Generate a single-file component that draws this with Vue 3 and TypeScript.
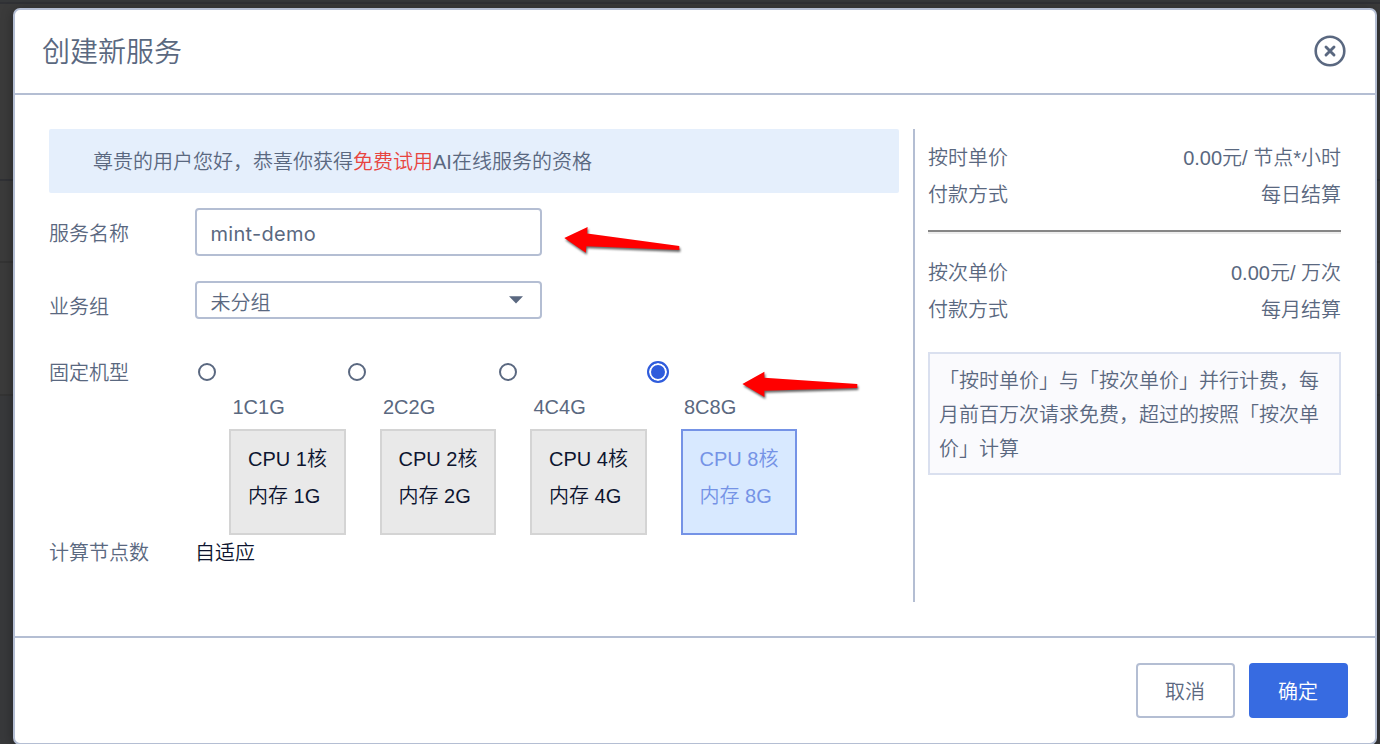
<script setup lang="ts">
import { ref } from 'vue'

interface Machine {
  id: string
  cpu: number
  memory: number
}

interface Price {
  label: string
  price: string
  cycle: string
}

const machines: Machine[] = [
  { id: '1C1G', cpu: 1, memory: 1 },
  { id: '2C2G', cpu: 2, memory: 2 },
  { id: '4C4G', cpu: 4, memory: 4 },
  { id: '8C8G', cpu: 8, memory: 8 },
]

const prices: Price[] = [
  { label: '按时单价', price: '0.00元/ 节点*小时', cycle: '每日结算' },
  { label: '按次单价', price: '0.00元/ 万次', cycle: '每月结算' },
]

const serviceName = ref('mint-demo')
const selected = ref('8C8G')
</script>

<template>
  <div class="screen">
    <div class="backdrop">
      <div class="strip top"></div>
      <div class="strip a"></div>
      <div class="strip b"></div>
      <div class="strip c"></div>
      <div class="strip d"></div>
    </div>

    <section class="modal">
      <header class="head">
        <h1>创建新服务</h1>
        <svg class="close" viewBox="0 0 32 32" width="32" height="32">
          <circle cx="16" cy="16" r="14.3" />
          <path d="M12 12 L20 20 M20 12 L12 20" />
        </svg>
      </header>

      <div class="body">
        <div class="form">
          <p class="banner">尊贵的用户您好，恭喜你获得<em>免费试用</em>AI在线服务的资格</p>

          <div class="row name-row">
            <label>服务名称</label>
            <input v-model="serviceName" type="text" />
          </div>

          <div class="row group-row">
            <label>业务组</label>
            <div class="select">
              <span>未分组</span>
              <svg viewBox="0 0 14 8" width="14" height="8"><path d="M0 0.3H14L7 7.5Z" /></svg>
            </div>
          </div>

          <div class="row machine-row">
            <label>固定机型</label>
            <div class="machines">
              <div
                v-for="m in machines"
                :key="m.id"
                class="machine"
                :class="{ active: m.id === selected }"
                @click="selected = m.id"
              >
                <div class="radio"><i></i></div>
                <div class="machine-name">{{ m.id }}</div>
                <div class="spec">
                  <div>CPU {{ m.cpu }}核</div>
                  <div>内存 {{ m.memory }}G</div>
                </div>
              </div>
            </div>
          </div>

          <div class="row node-row">
            <label>计算节点数</label>
            <span class="adaptive">自适应</span>
          </div>
        </div>

        <aside class="side">
          <template v-for="(p, i) in prices" :key="p.label">
            <hr v-if="i > 0" />
            <div class="line"><span>{{ p.label }}</span><span>{{ p.price }}</span></div>
            <div class="line"><span>付款方式</span><span>{{ p.cycle }}</span></div>
          </template>
          <p class="notice">「按时单价」与「按次单价」并行计费，每月前百万次请求免费，超过的按照「按次单价」计算</p>
        </aside>
      </div>

      <footer class="foot">
        <button class="btn">取消</button>
        <button class="btn primary">确定</button>
      </footer>
    </section>

    <svg class="arrows" viewBox="0 0 1380 744" width="1380" height="744">
      <path d="M564.3 237.9L587.6 227L587.2 233.4L679.3 246V250L586.4 246.2L585.8 252.8Z" />
      <path d="M742.4 384.1L764.4 371.7V377.8L857.3 384V388L764.4 390.8V397Z" />
    </svg>
  </div>
</template>

<style>
html,
body {
  margin: 0;
  overflow: hidden;
}
</style>

<style scoped>
* {
  box-sizing: border-box;
}
.screen {
  position: relative;
  width: 1380px;
  height: 744px;
  overflow: hidden;
  padding: 8px 3px 0 13px;
  background: #3b3b3b;
  color: #5a6880;
  font: 350 20px/37px 'Liberation Sans', 'Noto Sans CJK SC', sans-serif;
}
.backdrop {
  position: absolute;
  inset: 0;
  display: flex;
  flex-direction: column;
}
.strip {
  border-bottom: 2px solid #303135;
}
.top {
  height: 4px;
  background: #36383a;
}
.a {
  height: 177px;
}
.b {
  height: 82px;
  border-color: #343434;
}
.c {
  height: 133px;
  border-color: #343434;
}
.d {
  flex: 1;
  border: 0;
  background: #38393b;
}
.modal {
  position: relative;
  width: 1364px;
  height: 737px;
  display: flex;
  flex-direction: column;
  border: 2px solid #b4bed3;
  border-radius: 7px;
  background: #fff;
  box-shadow: 0 2px 12px rgba(0, 0, 0, 0.35);
}
.head {
  height: 85px;
  display: flex;
  justify-content: space-between;
  align-items: center;
  padding: 0 29px 0 27px;
  border-bottom: 2px solid #b4bed3;
}
h1 {
  margin: 2px 0 0;
  font-size: 28px;
  font-weight: 350;
  line-height: 40px;
}
.close {
  margin-bottom: 2px;
  fill: none;
  stroke: #5a6880;
  stroke-width: 2.6;
}
.close path {
  stroke-width: 2.9;
  stroke-linecap: round;
}
.body {
  height: 541px;
  display: flex;
  padding: 34px 34px 0;
}
.form {
  width: 850px;
}
.banner {
  height: 64px;
  margin: 0 0 15px;
  padding-left: 44px;
  border-radius: 2px;
  background: #e5effc;
  line-height: 66px;
}
.banner em {
  color: #e8443f;
  font-style: normal;
}
.row {
  display: flex;
}
.row label {
  width: 146px;
  flex: none;
}
.name-row {
  height: 73px;
}
.name-row label {
  line-height: 53px;
}
input {
  width: 347px;
  height: 48px;
  padding: 3px 14px 0 13.5px;
  border: 2px solid #b4bed3;
  border-radius: 4px;
  outline: 0;
  background: #fff;
  color: #5a6880;
  font: 400 20px 'Inter', sans-serif;
  letter-spacing: 0.3px;
}
.group-row {
  height: 73px;
}
.group-row label {
  line-height: 53px;
}
.select {
  width: 347px;
  height: 38px;
  display: flex;
  justify-content: space-between;
  padding: 0 17px 0 13.5px;
  border: 2px solid #b4bed3;
  border-radius: 4px;
  line-height: 40px;
}
.select svg {
  margin-top: 13px;
  fill: #5a6880;
}
.machine-row {
  height: 181px;
}
.machine-row label {
  line-height: 39px;
}
.machines {
  display: flex;
}
.machine {
  width: 150.5px;
}
.radio {
  width: 23.8px;
  height: 36px;
  display: flex;
  align-items: center;
  justify-content: center;
}
.radio i {
  width: 18px;
  height: 18px;
  border: 2px solid #5a6880;
  border-radius: 50%;
}
.active .radio i {
  width: 22px;
  height: 22px;
  border-color: #2f5cdc;
  background: #2f5cdc;
  box-shadow: inset 0 0 0 2px #fff;
}
.machine-name {
  height: 39px;
  padding-left: 37.5px;
  line-height: 35px;
}
.spec {
  width: 116.5px;
  height: 106px;
  margin-left: 34px;
  padding: 10px 0 0 17px;
  border: 2px solid #d4d4d4;
  background: #e9e9e9;
  color: #0d1530;
}
.active .spec {
  border-color: #7593e6;
  background: #d8e9ff;
  color: #7593e6;
}
.adaptive {
  color: #0d1530;
}
.side {
  width: 428px;
  height: 473px;
  margin-left: 14px;
  padding: 11px 0 0 13px;
  border-left: 2px solid #b4bed3;
}
.line {
  display: flex;
  justify-content: space-between;
}
hr {
  height: 4px;
  margin: 16px 0 21px;
  border: 0;
  border-top: 2px solid #868686;
  border-bottom: 2px solid #ededed;
}
.notice {
  height: 123px;
  margin: 23px 0 0;
  padding: 10px 9px 0;
  border: 2px solid #dae0ef;
  background: #fafafd;
  line-height: 34px;
}
.foot {
  flex: 1;
  display: flex;
  justify-content: flex-end;
  gap: 14px;
  padding: 25px 27px 0;
  border-top: 2px solid #b4bed3;
}
.btn {
  width: 99px;
  height: 55px;
  padding: 3px 1px 0 0;
  border: 2px solid #b4bed3;
  border-radius: 4px;
  background: #fff;
  color: inherit;
  font: inherit;
}
.btn.primary {
  border-color: #376be1;
  background: #376be1;
  color: #fff;
}
.arrows {
  position: absolute;
  left: 0;
  top: 0;
  pointer-events: none;
  fill: #f00;
  filter: drop-shadow(1px 2px 1px rgba(0, 0, 0, 0.6));
}
</style>
